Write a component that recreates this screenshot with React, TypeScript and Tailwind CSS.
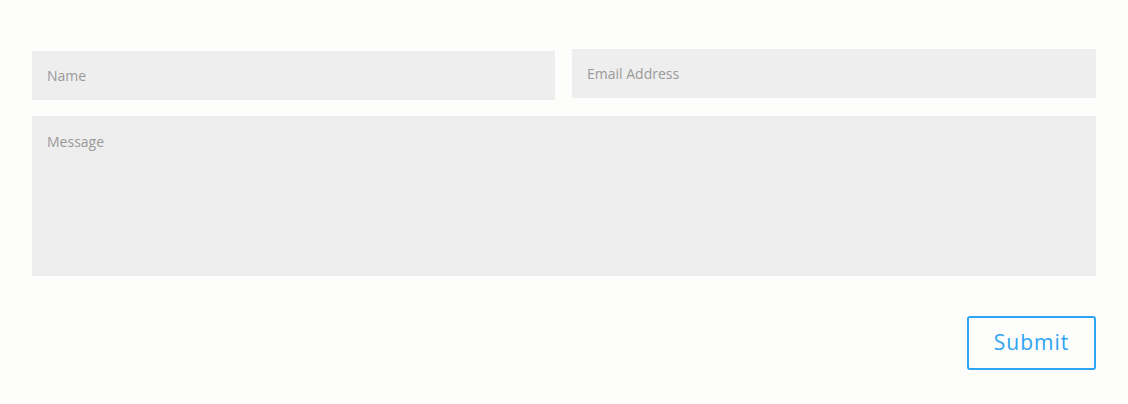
import React from "react";

const App = () => {
  return (
    <div className="min-h-[404px] w-full bg-[#fdfdfc] px-8 pt-[49px] font-['Open_Sans',sans-serif]">
      <form className="flex flex-col" onSubmit={(e) => e.preventDefault()}>
        <div className="grid grid-cols-[523px_1fr] items-start gap-[17px]">
          <input
            type="text"
            placeholder="Name"
            className="mt-[2px] h-[49px] w-full bg-[#eeeeef] px-[15px] text-[14px] text-[#999] outline-none placeholder:text-[#999]"
          />
          <input
            type="email"
            placeholder="Email Address"
            className="h-[49px] w-full bg-[#eeeeef] px-[15px] text-[14px] text-[#999] outline-none placeholder:text-[#999]"
          />
        </div>
        <textarea
          placeholder="Message"
          className="mt-4 h-[160px] w-full resize-none bg-[#eeeeef] px-[15px] pt-[16px] text-[14px] leading-5 text-[#999] outline-none placeholder:text-[#999]"
        />
        <div className="mt-10 flex justify-end">
          <button
            type="submit"
            className="h-[54px] w-[129px] rounded-[3px] border-2 border-[#2ea3f2] text-[21px] tracking-[1px] text-[#2ea3f2]"
          >
            Submit
          </button>
        </div>
      </form>
    </div>
  );
};

export default App;
